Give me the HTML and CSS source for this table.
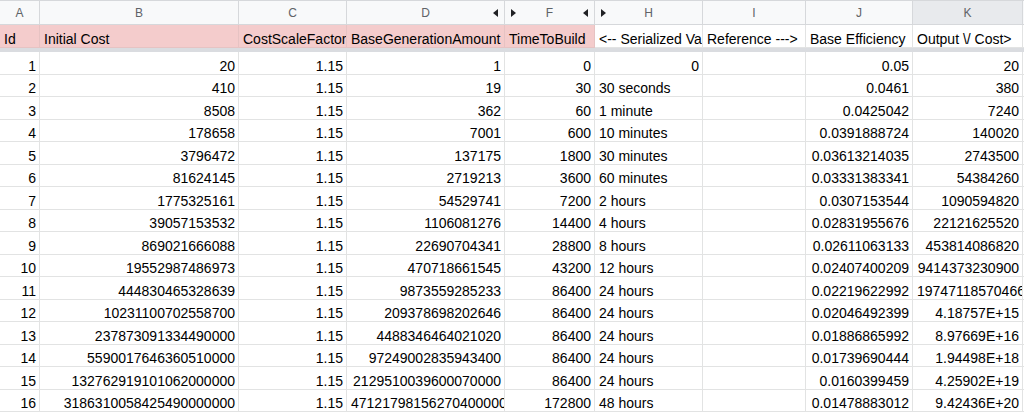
FILE: index.html
```html
<!DOCTYPE html>
<html>
<head>
<meta charset="utf-8">
<link rel="stylesheet" href="styles.css">
</head>
<body>
<div class="sheet">
  <div class="h"><span class="sp"></span><span class="lt">A</span><span class="sp"></span></div>
  <div class="h"><span class="sp"></span><span class="lt">B</span><span class="sp"></span></div>
  <div class="h"><span class="sp"></span><span class="lt">C</span><span class="sp"></span></div>
  <div class="h"><span class="sp"></span><span class="lt">D</span><span class="sp tri-l"></span></div>
  <div class="h"><span class="sp tri-r"></span><span class="lt">F</span><span class="sp tri-l"></span></div>
  <div class="h"><span class="sp tri-r"></span><span class="lt">H</span><span class="sp"></span></div>
  <div class="h"><span class="sp"></span><span class="lt">I</span><span class="sp"></span></div>
  <div class="h"><span class="sp"></span><span class="lt">J</span><span class="sp"></span></div>
  <div class="h sel"><span class="sp"></span><span class="lt">K</span><span class="sp"></span></div>
  <div class="h"><span class="sp"></span><span class="lt">L</span><span class="sp"></span></div>

  <div class="c p">Id</div>
  <div class="c p">Initial Cost</div>
  <div class="c p">CostScaleFactor</div>
  <div class="c p">BaseGenerationAmount</div>
  <div class="c p">TimeToBuild</div>
  <div class="c">&lt;-- Serialized Value</div>
  <div class="c">Reference ---&gt;</div>
  <div class="c">Base Efficiency</div>
  <div class="c">Output \/ Cost&gt;</div>
  <div class="c"></div>

  <div class="freeze"></div>

  <div class="c r">1</div><div class="c r">20</div><div class="c r">1.15</div><div class="c r">1</div><div class="c r">0</div><div class="c r">0</div><div class="c"></div><div class="c r">0.05</div><div class="c r">20</div><div class="c"></div>
  <div class="c r">2</div><div class="c r">410</div><div class="c r">1.15</div><div class="c r">19</div><div class="c r">30</div><div class="c">30 seconds</div><div class="c"></div><div class="c r">0.0461</div><div class="c r">380</div><div class="c"></div>
  <div class="c r">3</div><div class="c r">8508</div><div class="c r">1.15</div><div class="c r">362</div><div class="c r">60</div><div class="c">1 minute</div><div class="c"></div><div class="c r">0.0425042</div><div class="c r">7240</div><div class="c"></div>
  <div class="c r">4</div><div class="c r">178658</div><div class="c r">1.15</div><div class="c r">7001</div><div class="c r">600</div><div class="c">10 minutes</div><div class="c"></div><div class="c r">0.0391888724</div><div class="c r">140020</div><div class="c"></div>
  <div class="c r">5</div><div class="c r">3796472</div><div class="c r">1.15</div><div class="c r">137175</div><div class="c r">1800</div><div class="c">30 minutes</div><div class="c"></div><div class="c r">0.03613214035</div><div class="c r">2743500</div><div class="c"></div>
  <div class="c r">6</div><div class="c r">81624145</div><div class="c r">1.15</div><div class="c r">2719213</div><div class="c r">3600</div><div class="c">60 minutes</div><div class="c"></div><div class="c r">0.03331383341</div><div class="c r">54384260</div><div class="c"></div>
  <div class="c r">7</div><div class="c r">1775325161</div><div class="c r">1.15</div><div class="c r">54529741</div><div class="c r">7200</div><div class="c">2 hours</div><div class="c"></div><div class="c r">0.0307153544</div><div class="c r">1090594820</div><div class="c"></div>
  <div class="c r">8</div><div class="c r">39057153532</div><div class="c r">1.15</div><div class="c r">1106081276</div><div class="c r">14400</div><div class="c">4 hours</div><div class="c"></div><div class="c r">0.02831955676</div><div class="c r">22121625520</div><div class="c"></div>
  <div class="c r">9</div><div class="c r">869021666088</div><div class="c r">1.15</div><div class="c r">22690704341</div><div class="c r">28800</div><div class="c">8 hours</div><div class="c"></div><div class="c r">0.02611063133</div><div class="c r">453814086820</div><div class="c"></div>
  <div class="c r">10</div><div class="c r">19552987486973</div><div class="c r">1.15</div><div class="c r">470718661545</div><div class="c r">43200</div><div class="c">12 hours</div><div class="c"></div><div class="c r">0.02407400209</div><div class="c r">9414373230900</div><div class="c"></div>
  <div class="c r">11</div><div class="c r">444830465328639</div><div class="c r">1.15</div><div class="c r">9873559285233</div><div class="c r">86400</div><div class="c">24 hours</div><div class="c"></div><div class="c r">0.02219622992</div><div class="c r">197471185704660</div><div class="c"></div>
  <div class="c r">12</div><div class="c r">10231100702558700</div><div class="c r">1.15</div><div class="c r">209378698202646</div><div class="c r">86400</div><div class="c">24 hours</div><div class="c"></div><div class="c r">0.02046492399</div><div class="c r">4.18757E+15</div><div class="c"></div>
  <div class="c r">13</div><div class="c r">237873091334490000</div><div class="c r">1.15</div><div class="c r">4488346464021020</div><div class="c r">86400</div><div class="c">24 hours</div><div class="c"></div><div class="c r">0.01886865992</div><div class="c r">8.97669E+16</div><div class="c"></div>
  <div class="c r">14</div><div class="c r">5590017646360510000</div><div class="c r">1.15</div><div class="c r">97249002835943400</div><div class="c r">86400</div><div class="c">24 hours</div><div class="c"></div><div class="c r">0.01739690444</div><div class="c r">1.94498E+18</div><div class="c"></div>
  <div class="c r">15</div><div class="c r">132762919101062000000</div><div class="c r">1.15</div><div class="c r">2129510039600070000</div><div class="c r">86400</div><div class="c">24 hours</div><div class="c"></div><div class="c r">0.0160399459</div><div class="c r">4.25902E+19</div><div class="c"></div>
  <div class="c r">16</div><div class="c r">3186310058425490000000</div><div class="c r">1.15</div><div class="c r">47121798156270400000</div><div class="c r">172800</div><div class="c">48 hours</div><div class="c"></div><div class="c r">0.01478883012</div><div class="c r">9.42436E+20</div><div class="c"></div>
</div>
</body>
</html>
```

FILE: styles.css
```css
html, body {
  margin: 0;
  padding: 0;
  background: #ffffff;
  overflow: hidden;
}

.sheet {
  display: grid;
  width: 1124px;
  grid-template-columns: 40px 199px 108px 158px 90px 108px 103px 107px 110px 101px;
  grid-template-rows: 25px 23px 4px repeat(16, 22.5px);
  font-family: "Liberation Sans", Arial, sans-serif;
  font-size: 14px;
  color: #000000;
}

.h {
  box-sizing: border-box;
  display: flex;
  align-items: center;
  background: #f8f9fa;
  border-right: 1px solid #d6d8db;
  border-bottom: 1px solid #d6d8db;
  border-top: 1px solid #d6d8db;
  font-size: 12px;
  color: #5f6368;
  padding: 1px 6px 0 6px;
}

.h.sel {
  background: #e8eaed;
}

.lt {
  flex: 1;
  text-align: center;
}

.sp {
  width: 5px;
  height: 8px;
  flex: none;
}

.tri-l {
  width: 0;
  height: 0;
  border-top: 4px solid transparent;
  border-bottom: 4px solid transparent;
  border-right: 5px solid #202124;
}

.tri-r {
  width: 0;
  height: 0;
  border-top: 4px solid transparent;
  border-bottom: 4px solid transparent;
  border-left: 5px solid #202124;
}

.c {
  box-sizing: border-box;
  border-right: 1px solid #e2e3e3;
  border-bottom: 1px solid #e2e3e3;
  padding: 5.5px 3px 0 4px;
  white-space: nowrap;
  overflow: hidden;
  line-height: 16px;
}

.c.r {
  text-align: right;
}

.c.p {
  background: #f4cccc;
  border-right-color: #e6c3c3;
  border-bottom-color: #e6c3c3;
}

.freeze {
  grid-column: 1 / -1;
  background: #dadce0;
}
```
